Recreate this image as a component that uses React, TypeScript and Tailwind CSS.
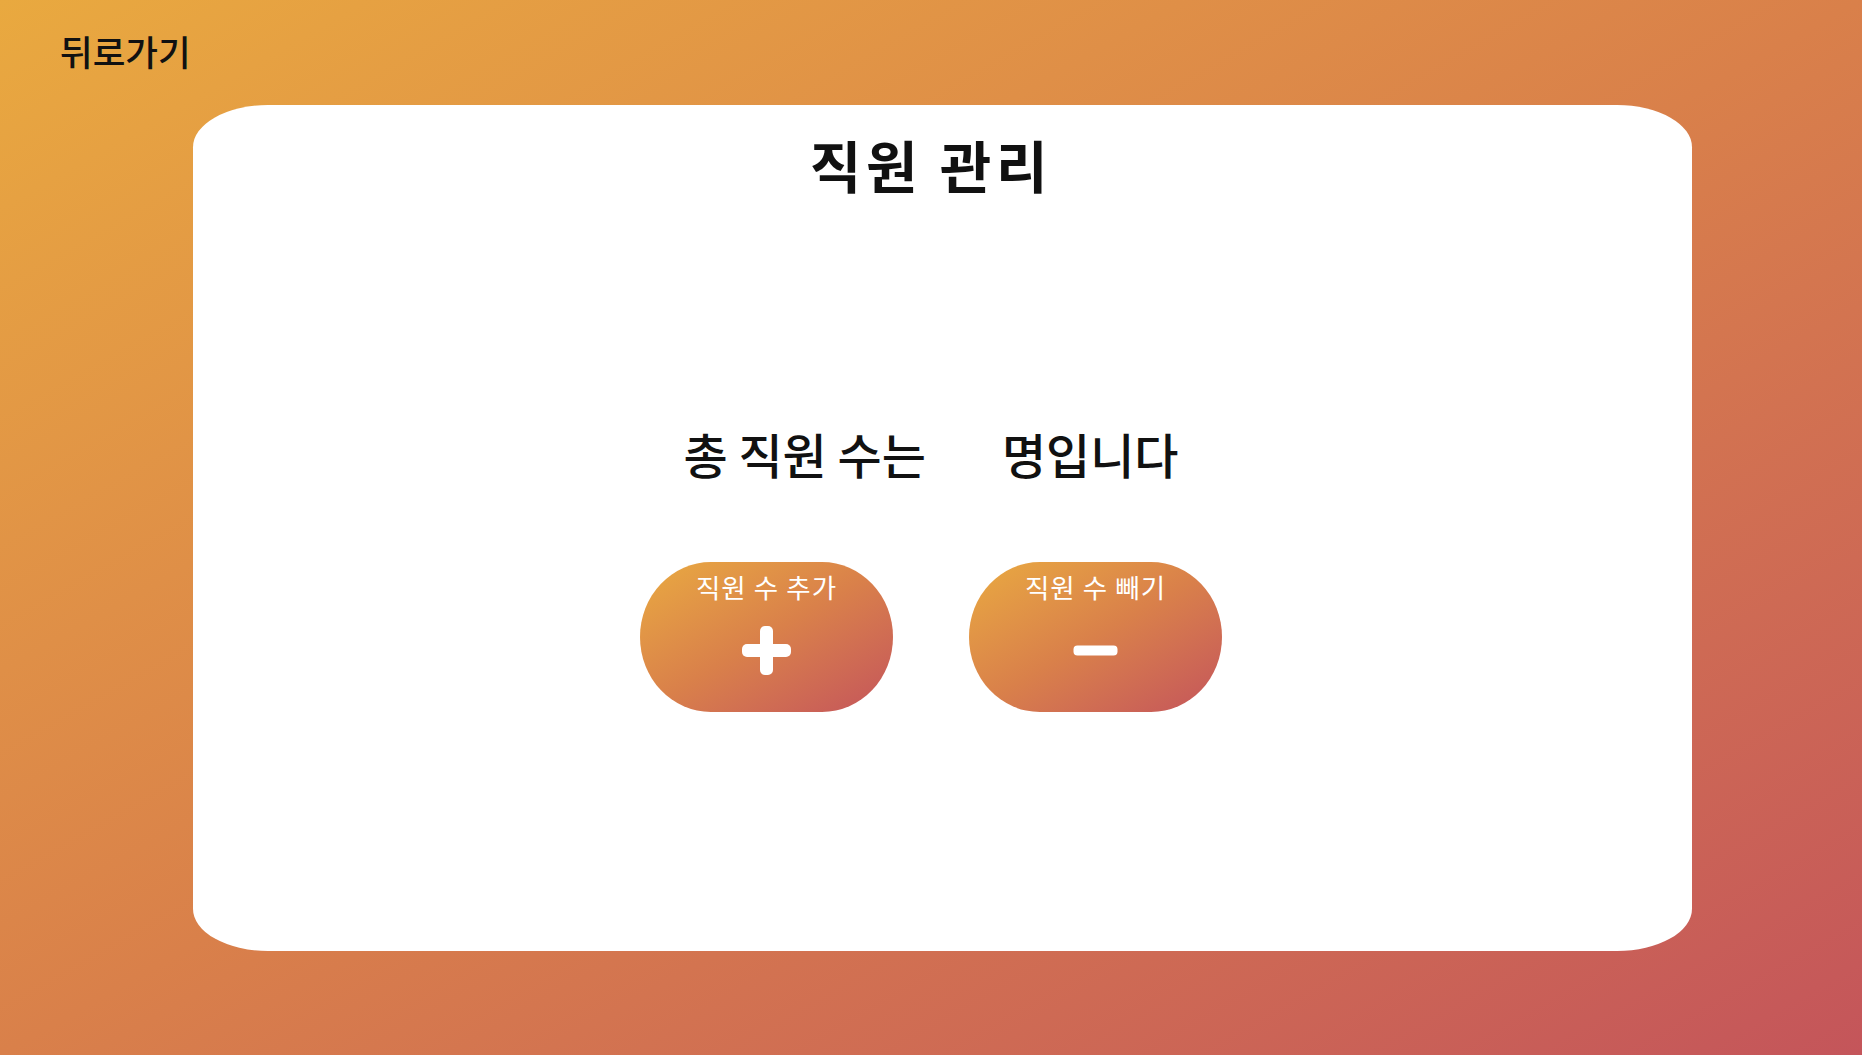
import React from "react";

const font = { fontFamily: '"Noto Sans CJK KR", "Noto Sans", sans-serif' };

function PlusIcon() {
  return (
    <svg width="49" height="49" viewBox="0 0 49 49" fill="white">
      <rect x="18" y="0" width="13" height="49" rx="5" />
      <rect x="0" y="18" width="49" height="13" rx="5" />
    </svg>
  );
}

function MinusIcon() {
  return (
    <svg width="49" height="49" viewBox="0 0 49 49" fill="white">
      <rect x="2.5" y="19.5" width="44" height="10" rx="4" />
    </svg>
  );
}

function Btn({ label, icon }: { label: string; icon: React.ReactNode }) {
  return (
    <button className="w-[253px] h-[150px] rounded-[28%/50%] bg-gradient-to-br from-[#e9aa40] via-[#d9804a] to-[#c4545a] flex flex-col items-center pt-[12px] text-white">
      <span className="text-[26.5px] leading-none tracking-[0.04em]">{label}</span>
      <span className="mt-[25.5px] flex">{icon}</span>
    </button>
  );
}

export default function App() {
  return (
    <div
      className="w-full h-[1055px] overflow-hidden bg-gradient-to-br from-[#e9a93f] via-[#d9804a] to-[#c4555a] text-[#111]"
      style={font}
    >
      <div className="h-[105px] pl-[60px] pt-[33px]">
        <span className="text-[35.5px] leading-none font-medium">뒤로가기</span>
      </div>
      <div className="ml-[193px] w-[1499px] h-[846px] bg-white rounded-[5%] flex flex-col items-center pr-[23px] pt-[30.5px]">
        <h1 className="text-[56px] leading-none font-bold tracking-[0.085em]">직원 관리</h1>
        <p className="mt-[237px] text-[48px] leading-none font-medium flex items-center">
          <span>총 직원 수는</span>
          <span className="inline-block w-[76px]"></span>
          <span>명입니다</span>
        </p>
        <div className="mt-[85.5px] flex gap-[76px]">
          <Btn label="직원 수 추가" icon={<PlusIcon />} />
          <Btn label="직원 수 빼기" icon={<MinusIcon />} />
        </div>
      </div>
    </div>
  );
}
